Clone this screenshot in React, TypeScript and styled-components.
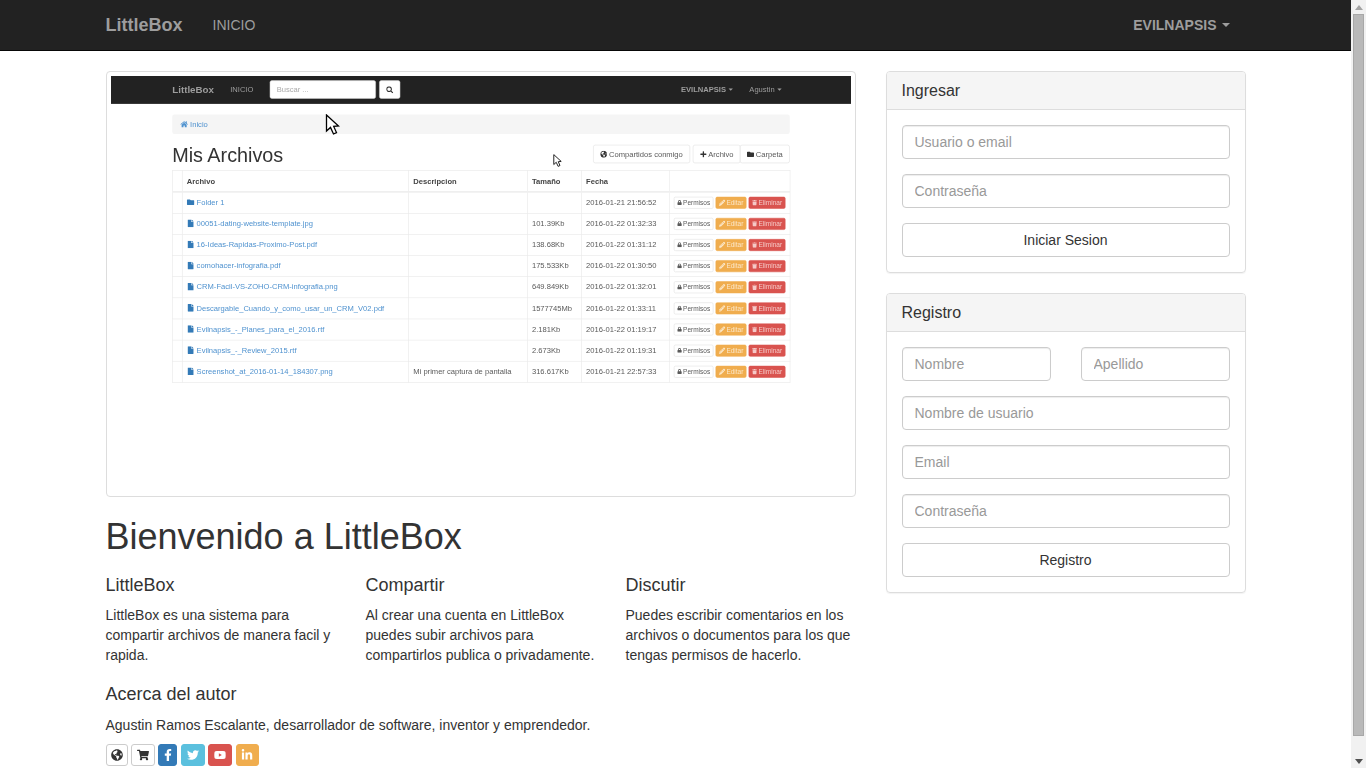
import React from "react";
import styled, { createGlobalStyle } from "styled-components";
import {
  FaFacebookF, FaFile, FaFolder, FaGlobeAmericas, FaHome, FaLinkedinIn, FaLock,
  FaPencilAlt, FaPlus, FaSearch, FaShoppingCart, FaTrash, FaTwitter, FaYoutube,
} from "react-icons/fa";

const Global = createGlobalStyle`
  html { overflow: hidden; }
  body { margin: 0; background: #fff; color: #333; font: 14px/20px "Liberation Sans", Arial, sans-serif; }
  * { box-sizing: border-box; }
`;

const Window = styled.div`display: flex; height: 768px; overflow: hidden;`;
const Page = styled.div`width: 1351px; flex: none;`;
const ScrollTrack = styled.div`
  width: 15px; flex: none; background: #f1f1f1; display: flex; flex-direction: column; align-items: center;
`;
const ScrollArrow = styled.div<{ $down?: boolean }>`
  flex: none; width: 0; height: 0; margin: ${(p) => (p.$down ? "auto 0 4px" : "5px 0 4px")};
  border-left: 4px solid transparent; border-right: 4px solid transparent;
  ${(p) => (p.$down ? "border-top: 5px solid #505050;" : "border-bottom: 5px solid #a3a3a3;")}
`;
const ScrollThumb = styled.div`
  flex: none; width: 11px; height: 722px; background: #b9b9b9; border: 1px solid #a8a8a8;
`;
const Navbar = styled.nav`height: 51px; background: #222; border-bottom: 1px solid #080808;`;
const NavInner = styled.div`
  width: 1170px; height: 50px; margin: 0 auto; padding: 0 15px;
  display: flex; align-items: center; color: #9d9d9d;
`;
const Brand = styled.span`font-size: 18px; font-weight: 700; margin-right: 30px;`;
const NavLink = styled.span`font-size: 14px;`;
const Spacer = styled.div`flex: 1;`;
const NavRight = styled.span`
  font-size: 14px; font-weight: 700; margin-right: 16px; display: flex; align-items: center; gap: 5px;
`;
const Caret = styled.i`
  display: inline-block; width: 0; height: 0; border-top: 4px solid currentColor;
  border-left: 4px solid transparent; border-right: 4px solid transparent;
`;
const Container = styled.div`
  width: 1170px; margin: 20px auto 0; padding: 0 15px;
  display: grid; grid-template-columns: 750px 360px; column-gap: 30px; align-items: start;
`;
const Thumb = styled.div`
  position: relative; height: 426px; padding: 4px; border: 1px solid #ddd; border-radius: 4px; margin-bottom: 20px;
`;
const ShotFrame = styled.div`width: 740px; height: 416px; overflow: hidden; position: relative; filter: blur(0.55px);`;
const Shot = styled.div`
  width: 1366px; height: 768px; transform: scale(0.54173); transform-origin: 0 0;
  background: #fff; color: #5a5a5a;
`;
const MiniSearch = styled.div`margin-left: 30px; display: flex; gap: 6px;`;
const MiniInput = styled.div`
  width: 196px; height: 34px; padding: 6px 12px; background: #fff; border: 1px solid #ccc; border-radius: 4px; color: #aaa;
`;
const MiniIconBtn = styled.div`
  width: 39px; height: 34px; background: #fff; border: 1px solid #ccc; border-radius: 4px; color: #333;
  display: flex; align-items: center; justify-content: center; font-size: 13px;
`;
const MiniRightLink = styled.span<{ $bold?: boolean }>`
  display: inline-flex; align-items: center; gap: 5px; font-weight: ${(p) => (p.$bold ? 700 : 400)}; margin-right: 30px;
  &:last-child { margin-right: 15px; }
`;
const MiniBody = styled.div`width: 1170px; margin: 20px auto 0; padding: 0 15px;`;
const Breadcrumb = styled.div`
  height: 36px; padding: 8px 15px; background: #f5f5f5; border-radius: 4px; margin-bottom: 20px; color: #4f92cf;
  display: flex; align-items: center; gap: 4px; font-size: 14px;
`;
const TitleRow = styled.div`display: flex; justify-content: space-between; align-items: flex-start; height: 47px;`;
const MiniTitle = styled.div`font-size: 36.5px; line-height: 40px; color: #333;`;
const BtnRow = styled.div`display: flex; gap: 5px;`;
const BtnGroup = styled.div`display: flex; & > * + * { margin-left: -1px; }`;
const MiniBtn = styled.div`
  height: 34px; padding: 6px 12px; border: 1px solid #ddd; border-radius: 4px; background: #fff;
  display: flex; align-items: center; gap: 3px; white-space: nowrap; font-size: 14px;
  & svg { font-size: 13px; color: #333; }
`;
const Table = styled.table`
  width: 1140px; table-layout: fixed; border-collapse: collapse; border: 1px solid #e6e6e6;
`;
const Col = styled.col<{ $w: number }>`width: ${(p) => p.$w}px;`;
const Th = styled.th`
  height: 39px; padding: 8px; border: 1px solid #e6e6e6; border-bottom-width: 2px; text-align: left; font-weight: 700; color: #444;
`;
const Td = styled.td`
  height: 39px; padding: 8px; border: 1px solid #e6e6e6; vertical-align: top; white-space: nowrap; overflow: hidden;
`;
const FileLink = styled.span`
  color: #4f92cf; display: inline-flex; align-items: center; gap: 4px;
  & svg { color: #337ab7; }
`;
const ActionCell = styled.div`display: flex; gap: 4px;`;
const XsBtn = styled.div<{ $kind: "default" | "warning" | "danger" }>`
  height: 22px; padding: 1px 5px; font-size: 12px; line-height: 18px; border-radius: 3px; border: 1px solid;
  display: flex; align-items: center; gap: 2px; white-space: nowrap;
  background: ${(p) => ({ default: "#fff", warning: "#f0ad4e", danger: "#d9534f" }[p.$kind])};
  border-color: ${(p) => ({ default: "#ddd", warning: "#f0ad4e", danger: "#d9534f" }[p.$kind])};
  color: ${(p) => ({ default: "#5a5a5a", warning: "#fbe6c6", danger: "#f5c9c7" }[p.$kind])};
  & svg { font-size: ${(p) => ({ default: 9, warning: 12, danger: 10 }[p.$kind])}px; }
`;
const Cursor = styled.svg<{ $x: number; $y: number }>`
  position: absolute; left: ${(p) => p.$x}px; top: ${(p) => p.$y}px;
`;
const H1 = styled.h1`font-size: 36px; font-weight: 500; line-height: 40px; margin: 0 0 18px;`;
const Columns = styled.div`display: grid; grid-template-columns: repeat(3, 230px); column-gap: 30px;`;
const H4 = styled.h4`font-size: 18px; font-weight: 500; line-height: 20px; margin: 0 0 10px;`;
const P = styled.p`margin: 0 0 10px;`;
const Author = styled(H4)`margin: 9px 0 11px;`;
const AuthorText = styled(P)`margin-bottom: 9px;`;
const Social = styled.div`display: flex; gap: 3.6px;`;
const SocialBtn = styled.div<{ $bg?: string; $w: number }>`
  width: ${(p) => p.$w}px; height: 22px; border-radius: 3px; border: 1px solid ${(p) => p.$bg ?? "#ccc"};
  background: ${(p) => p.$bg ?? "#fff"}; color: ${(p) => (p.$bg ? "#fff" : "#333")};
  display: flex; align-items: center; justify-content: center; font-size: 12px;
`;
const Panel = styled.section`
  border: 1px solid #ddd; border-radius: 4px; margin-bottom: 20px; box-shadow: 0 1px 1px rgba(0,0,0,.05);
`;
const PanelHead = styled.div`
  height: 38px; padding: 10px 15px; background: #f5f5f5; border-bottom: 1px solid #ddd; border-radius: 3px 3px 0 0;
  font-size: 16px; line-height: 18px;
`;
const PanelBody = styled.form`padding: 15px; display: flex; flex-direction: column; gap: 15px;`;
const Input = styled.input`
  width: 100%; height: 34px; padding: 6px 12px; font: 14px/20px "Liberation Sans", Arial, sans-serif; color: #555;
  border: 1px solid #ccc; border-radius: 4px; box-shadow: inset 0 1px 1px rgba(0,0,0,.075); outline: 0;
  &::placeholder { color: #999; opacity: 1; }
`;
const Pair = styled.div`display: grid; grid-template-columns: 149px 149px; column-gap: 30px;`;
const SubmitBtn = styled.button`
  height: 34px; background: #fff; border: 1px solid #ccc; border-radius: 4px; color: #333;
  font: 14px/20px "Liberation Sans", Arial, sans-serif; padding: 6px 12px;
`;

const rows: [string, string, string, string, string][] = [
  ["folder", "Folder 1", "", "", "2016-01-21 21:56:52"],
  ["file", "00051-dating-website-template.jpg", "", "101.39Kb", "2016-01-22 01:32:33"],
  ["file", "16-Ideas-Rapidas-Proximo-Post.pdf", "", "138.68Kb", "2016-01-22 01:31:12"],
  ["file", "comohacer-infografia.pdf", "", "175.533Kb", "2016-01-22 01:30:50"],
  ["file", "CRM-Facil-VS-ZOHO-CRM-infografia.png", "", "649.849Kb", "2016-01-22 01:32:01"],
  ["file", "Descargable_Cuando_y_como_usar_un_CRM_V02.pdf", "", "1577745Mb", "2016-01-22 01:33:11"],
  ["file", "Evilnapsis_-_Planes_para_el_2016.rtf", "", "2.181Kb", "2016-01-22 01:19:17"],
  ["file", "Evilnapsis_-_Review_2015.rtf", "", "2.673Kb", "2016-01-22 01:19:31"],
  ["file", "Screenshot_at_2016-01-14_184307.png", "Mi primer captura de pantalla", "316.617Kb", "2016-01-21 22:57:33"],
];
const widths = [18, 418, 219, 100, 162, 223];

const arrow = "M1 1 L1 17 L5 13.4 L8 20 L11 18.6 L8.2 12.4 L13 12 Z";

export default function App() {
  return (
    <Window>
      <Global />
      <Page>
        <Navbar>
          <NavInner>
            <Brand>LittleBox</Brand>
            <NavLink>INICIO</NavLink>
            <Spacer />
            <NavRight>EVILNAPSIS <Caret /></NavRight>
          </NavInner>
        </Navbar>
        <Container>
          <main>
            <Thumb>
              <ShotFrame>
                <Shot>
                  <Navbar>
                    <NavInner>
                      <Brand>LittleBox</Brand>
                      <NavLink>INICIO</NavLink>
                      <MiniSearch>
                        <MiniInput>Buscar ...</MiniInput>
                        <MiniIconBtn><FaSearch /></MiniIconBtn>
                      </MiniSearch>
                      <Spacer />
                      <MiniRightLink $bold>EVILNAPSIS <Caret /></MiniRightLink>
                      <MiniRightLink>Agustin <Caret /></MiniRightLink>
                    </NavInner>
                  </Navbar>
                  <MiniBody>
                    <Breadcrumb><FaHome /> Inicio</Breadcrumb>
                    <TitleRow>
                      <MiniTitle>Mis Archivos</MiniTitle>
                      <BtnRow>
                        <MiniBtn><FaGlobeAmericas /> Compartidos conmigo</MiniBtn>
                        <BtnGroup>
                          <MiniBtn><FaPlus /> Archivo</MiniBtn>
                          <MiniBtn><FaFolder /> Carpeta</MiniBtn>
                        </BtnGroup>
                      </BtnRow>
                    </TitleRow>
                    <Table>
                      <colgroup>{widths.map((w, i) => <Col key={i} $w={w} />)}</colgroup>
                      <thead>
                        <tr><Th /><Th>Archivo</Th><Th>Descripcion</Th><Th>Tamaño</Th><Th>Fecha</Th><Th /></tr>
                      </thead>
                      <tbody>
                        {rows.map(([kind, name, desc, size, date]) => (
                          <tr key={name}>
                            <Td />
                            <Td><FileLink>{kind === "folder" ? <FaFolder /> : <FaFile />} {name}</FileLink></Td>
                            <Td>{desc}</Td>
                            <Td>{size}</Td>
                            <Td>{date}</Td>
                            <Td>
                              <ActionCell>
                                <XsBtn $kind="default"><FaLock /> Permisos</XsBtn>
                                <XsBtn $kind="warning"><FaPencilAlt /> Editar</XsBtn>
                                <XsBtn $kind="danger"><FaTrash /> Eliminar</XsBtn>
                              </ActionCell>
                            </Td>
                          </tr>
                        ))}
                      </tbody>
                    </Table>
                  </MiniBody>
                </Shot>
                <Cursor $x={214} $y={38} width="15" height="21" viewBox="0 0 14 21">
                  <path d={arrow} fill="#fff" stroke="#000" strokeWidth="1.3" />
                </Cursor>
                <Cursor $x={442} $y={78} width="9" height="13" viewBox="0 0 14 21">
                  <path d={arrow} fill="#fff" stroke="#222" strokeWidth="1.6" />
                </Cursor>
              </ShotFrame>
            </Thumb>
            <H1>Bienvenido a LittleBox</H1>
            <Columns>
              <div>
                <H4>LittleBox</H4>
                <P>LittleBox es una sistema para compartir archivos de manera facil y rapida.</P>
              </div>
              <div>
                <H4>Compartir</H4>
                <P>Al crear una cuenta en LittleBox puedes subir archivos para compartirlos publica o privadamente.</P>
              </div>
              <div>
                <H4>Discutir</H4>
                <P>Puedes escribir comentarios en los archivos o documentos para los que tengas permisos de hacerlo.</P>
              </div>
            </Columns>
            <Author>Acerca del autor</Author>
            <AuthorText>Agustin Ramos Escalante, desarrollador de software, inventor y emprendedor.</AuthorText>
            <Social>
              <SocialBtn $w={22}><FaGlobeAmericas /></SocialBtn>
              <SocialBtn $w={23.5}><FaShoppingCart /></SocialBtn>
              <SocialBtn $w={19} $bg="#337ab7"><FaFacebookF /></SocialBtn>
              <SocialBtn $w={24} $bg="#5bc0de"><FaTwitter /></SocialBtn>
              <SocialBtn $w={24} $bg="#d9534f"><FaYoutube /></SocialBtn>
              <SocialBtn $w={23} $bg="#f0ad4e"><FaLinkedinIn /></SocialBtn>
            </Social>
          </main>
          <aside>
            <Panel>
              <PanelHead>Ingresar</PanelHead>
              <PanelBody>
                <Input placeholder="Usuario o email" />
                <Input placeholder="Contraseña" />
                <SubmitBtn type="button">Iniciar Sesion</SubmitBtn>
              </PanelBody>
            </Panel>
            <Panel>
              <PanelHead>Registro</PanelHead>
              <PanelBody>
                <Pair>
                  <Input placeholder="Nombre" />
                  <Input placeholder="Apellido" />
                </Pair>
                <Input placeholder="Nombre de usuario" />
                <Input placeholder="Email" />
                <Input placeholder="Contraseña" />
                <SubmitBtn type="button">Registro</SubmitBtn>
              </PanelBody>
            </Panel>
          </aside>
        </Container>
      </Page>
      <ScrollTrack>
        <ScrollArrow />
        <ScrollThumb />
        <ScrollArrow $down />
      </ScrollTrack>
    </Window>
  );
}
